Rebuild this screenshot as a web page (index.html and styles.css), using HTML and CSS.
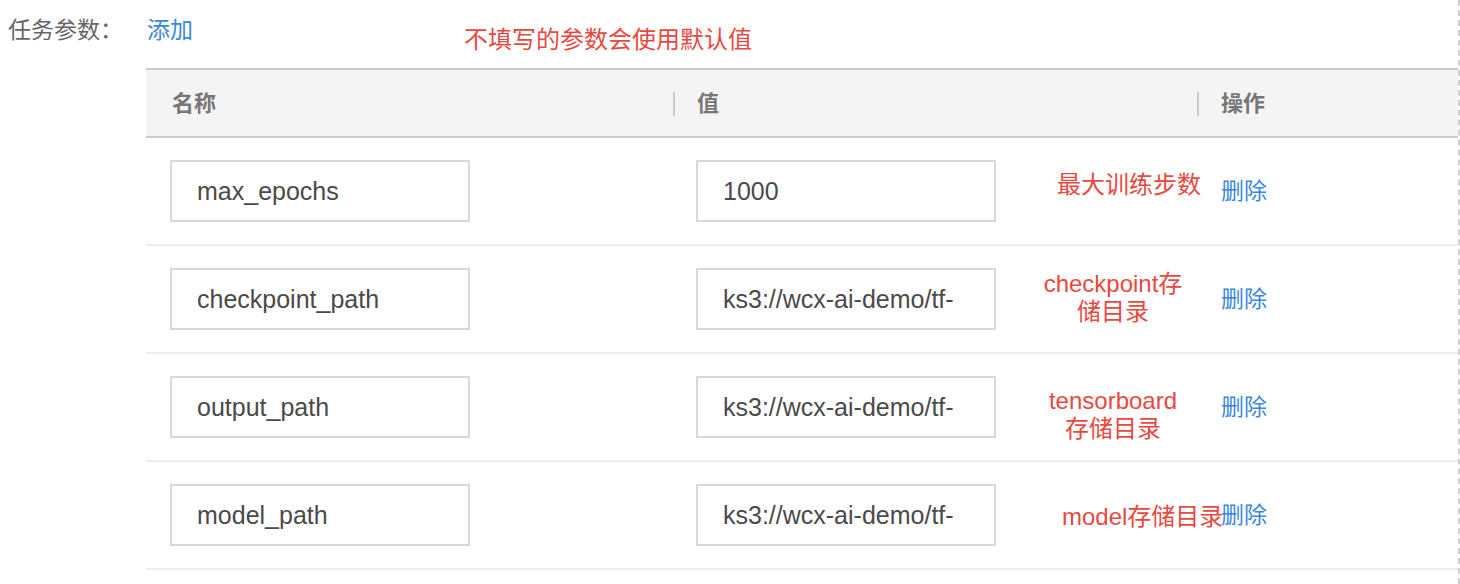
FILE: index.html
```html
<!DOCTYPE html>
<html lang="zh-CN">
<head>
<meta charset="utf-8">
<title>任务参数</title>
<link rel="stylesheet" href="styles.css">
</head>
<body>
<div class="page">
  <div class="form-item">
    <div class="form-label">任务参数：</div>
    <div class="form-content">
      <div class="toolbar">
        <a class="link add-link">添加</a>
        <span class="note top-note">不填写的参数会使用默认值</span>
      </div>
      <div class="table">
        <div class="thead">
          <div class="th th-name">名称</div>
          <div class="th th-sep">值</div>
          <div class="th th-sep">操作</div>
        </div>
        <div class="tr">
          <div class="td"><input class="field" value="max_epochs"></div>
          <div class="td td-value">
            <input class="field" value="1000">
            <span class="note note-1">最大训练步数</span>
          </div>
          <div class="td"><a class="link del">删除</a></div>
        </div>
        <div class="tr">
          <div class="td"><input class="field" value="checkpoint_path"></div>
          <div class="td td-value">
            <input class="field" value="ks3://wcx-ai-demo/tf-">
            <span class="note note-2">checkpoint存<br>储目录</span>
          </div>
          <div class="td"><a class="link del">删除</a></div>
        </div>
        <div class="tr">
          <div class="td"><input class="field" value="output_path"></div>
          <div class="td td-value">
            <input class="field" value="ks3://wcx-ai-demo/tf-">
            <span class="note note-3">tensorboard<br>存储目录</span>
          </div>
          <div class="td"><a class="link del">删除</a></div>
        </div>
        <div class="tr">
          <div class="td"><input class="field" value="model_path"></div>
          <div class="td td-value">
            <input class="field" value="ks3://wcx-ai-demo/tf-">
            <span class="note note-4">model存储目录</span>
          </div>
          <div class="td"><a class="link del">删除</a></div>
        </div>
      </div>
    </div>
  </div>
</div>
</body>
</html>
```

FILE: styles.css
```css
* { box-sizing: border-box; }

html, body {
  margin: 0;
  padding: 0;
  background: #ffffff;
}

body {
  font-family: "Noto Sans CJK SC", "Liberation Sans", sans-serif;
  color: #666666;
}

.page {
  width: 1460px;
  height: 584px;
  overflow: hidden;
  border-right: 2px dashed #d0d0d0;
}

.form-item {
  display: flex;
  width: 1458px;
}

.form-label {
  width: 146px;
  flex: none;
  padding-left: 8px;
  padding-top: 13px;
  font-size: 23px;
  line-height: 30px;
  color: #666666;
}

.form-content {
  flex: 1;
  display: flex;
  flex-direction: column;
}

.toolbar {
  height: 68px;
  display: flex;
  align-items: flex-start;
}

.link {
  color: #3a86e0;
  cursor: pointer;
}

.add-link {
  font-size: 23px;
  line-height: 30px;
  margin-top: 13px;
  margin-left: 1px;
}

.note {
  font-family: "Liberation Sans", "Noto Sans CJK SC", sans-serif;
  color: #e9483f;
  font-size: 24px;
  line-height: 28px;
}

.top-note {
  margin-left: 271px;
  margin-top: 26px;
}

.table {
  width: 1312px;
}

.thead {
  display: grid;
  grid-template-columns: 527px 524px 1fr;
  height: 70px;
  background: #f4f4f4;
  border-top: 2px solid #cccccc;
  border-bottom: 2px solid #cccccc;
}

.th {
  display: flex;
  align-items: center;
  padding-left: 24px;
  padding-bottom: 5px;
  font-size: 22px;
  font-weight: bold;
  color: #777777;
  position: relative;
}

.th-name { padding-left: 26px; }

.th-sep::before {
  content: "";
  position: absolute;
  left: 0;
  top: 22px;
  width: 2px;
  height: 24px;
  background: #cccccc;
}

.tr {
  display: grid;
  grid-template-columns: 527px 524px 1fr;
  height: 108px;
  border-bottom: 2px solid #eeeeee;
}

.td {
  display: flex;
  align-items: center;
  padding-left: 24px;
  position: relative;
}

.td-value { padding-left: 23px; }

.field {
  width: 300px;
  height: 62px;
  border: 2px solid #d9d9d9;
  border-radius: 0;
  padding: 0 10px 0 25px;
  font-family: "Liberation Sans", sans-serif;
  font-size: 25px;
  color: #4a4a4a;
  background: #ffffff;
  outline: none;
}

.del {
  font-size: 23px;
  line-height: 30px;
  margin-bottom: 5px;
}

.td .note {
  position: absolute;
}

.note-1 {
  left: 384px;
  top: 33px;
  white-space: nowrap;
}

.note-2 {
  left: 360px;
  width: 160px;
  top: 24px;
  text-align: center;
}

.note-3 {
  left: 360px;
  width: 160px;
  top: 33px;
  text-align: center;
}

.note-4 {
  left: 389px;
  top: 41px;
  white-space: nowrap;
}
```
